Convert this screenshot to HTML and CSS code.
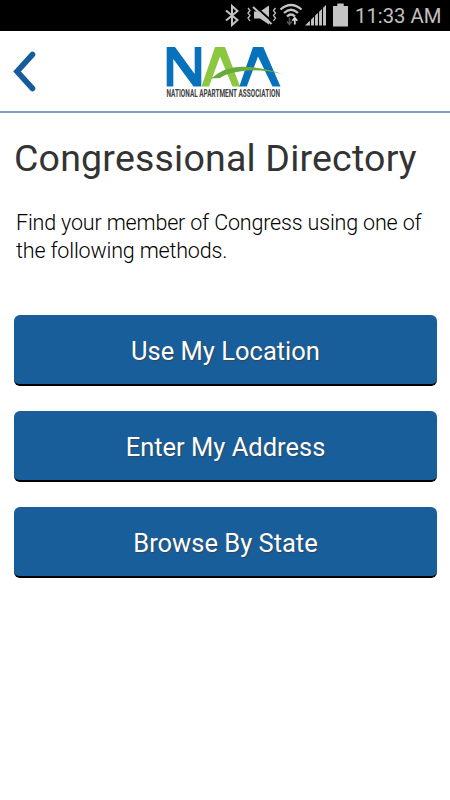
FILE: index.html
```html
<!DOCTYPE html>
<html lang="en">
<head>
  <meta charset="UTF-8">
  <title>Congressional Directory</title>
  <link rel="stylesheet" href="styles.css">
</head>
<body>

  <div class="status-bar">
    <svg class="status-icons" width="128" height="30" viewBox="0 0 128 30">
      <!-- bluetooth -->
      <path d="M4 10.500L15.500 20L10 25V6L15.500 11L4 20.500" fill="none" stroke="#c4c4c4" stroke-width="2"/>
      <!-- vibrate / muted -->
      <path d="M32 11.500h6l9-6v19l-9-6h-6z" fill="#c4c4c4"/>
      <path d="M32 5.500L52 23" stroke="#000" stroke-width="2"/>
      <path d="M31 7L49.500 24" stroke="#c4c4c4" stroke-width="2"/>
      <path d="M26 8l2 2.500-2 2.500 2 2.500-2 2.500 2 3M53.500 8l-2 2.500 2 2.500-2 2.500 2 2.500-2 3" fill="none" stroke="#c4c4c4" stroke-width="1.300"/>
      <!-- wifi -->
      <path d="M58.500 9.500Q69 .5 79.500 9.500M62 13Q69 6.500 76 13M65 16.500Q69 12.500 73 16.500" fill="none" stroke="#c4c4c4" stroke-width="2.300"/>
      <path d="M67.500 17.500v7M65 21.500l2.500 3 2.500-3" fill="none" stroke="#555" stroke-width="1.600"/>
      <path d="M72.800 24.500V18M70.300 20.800l2.500-3 2.500 3" fill="none" stroke="#ddd" stroke-width="1.700"/>
      <!-- signal -->
      <path d="M83 25.500L104 5v20.500z" fill="#c4c4c4"/>
      <path d="M88.500 5v21M92.500 5v21M96.500 5v21M100.500 5v21" stroke="#000" stroke-width="1.100"/>
      <!-- battery -->
      <path d="M111 6h4.300V3.500h6.400V6h4.300v20.500h-15z" fill="#c4c4c4"/>
    </svg>
    <span class="time">11:33 AM</span>
  </div>

  <header class="header">
    <a class="back" href="#">
      <svg width="24" height="42" viewBox="0 0 24 42">
        <path d="M19.500 3.500L4 20.500L19.500 37.500" fill="none" stroke="#165c9c" stroke-width="5.600" stroke-linecap="round"/>
      </svg>
    </a>
    <div class="logo">
      <svg width="122" height="60" viewBox="0 0 122 60">
        <path d="M.7 40.500V1H9L28.700 28V1h6.600v39.500H27.500L7.300 13v27.500z" fill="#0871bc"/>
        <path d="M35.500 40.500L49 1h10L74 40.500h-7.500L54 10.500L43 40.500z" fill="#8bc83f"/>
        <path d="M73.300 40.500L87 1h10.300L114.500 40.500h-8L92 10.500L80.800 40.500z" fill="#0871bc"/>
        <path d="M45 32.500Q58 21 76 20.800Q97 20.800 116.500 28Q92 22.800 77 25Q60 27 54 32z" fill="#6aaa3b"/>
        <text class="logo-name" x=".5" y="51" textLength="113.500" lengthAdjust="spacingAndGlyphs">NATIONAL APARTMENT ASSOCIATION</text>
      </svg>
    </div>
  </header>

  <main class="content">
    <h1>Congressional Directory</h1>
    <p class="intro">Find your member of Congress using one of the following methods.</p>

    <div class="methods">
      <button class="method-btn">Use My Location</button>
      <button class="method-btn">Enter My Address</button>
      <button class="method-btn">Browse By State</button>
    </div>
  </main>

</body>
</html>
```
FILE: styles.css
```css
* {
  box-sizing: border-box;
}
body {
  margin: 0;
  font-family: Roboto, sans-serif;
  background: #fff;
}
.status-bar {
  display: flex;
  justify-content: flex-end;
  height: 31px;
  padding-right: 9px;
  background: #000;
}
.status-icons {
  flex-shrink: 0;
  margin-right: 5px;
}
.time {
  width: 86px;
  font-size: 20.3px;
  line-height: 32px;
  color: #c0c0c0;
  white-space: nowrap;
}
.header {
  display: grid;
  grid-template-columns: 166px 1fr;
  height: 82px;
  padding-top: 15px;
  border-bottom: 2px solid #7e9cc8;
}
.back {
  height: 42px;
  padding: 5px 0 0 13px;
}
.logo svg {
  display: block;
  overflow: visible;
}
.logo-name {
  font-size: 10.2px;
  font-weight: bold;
  fill: #414042;
}
.content {
  padding: 22px 13px 0 14px;
}
h1 {
  margin: 0;
  font-size: 37.5px;
  font-weight: normal;
  line-height: 46px;
  letter-spacing: 0.2px;
  color: #333;
  white-space: nowrap;
}
.intro {
  margin: 28px 0 0;
  padding-left: 2px;
  font-size: 21.5px;
  font-weight: 300;
  line-height: 28px;
  letter-spacing: -0.17px;
  color: #000;
}
.methods {
  display: grid;
  gap: 25px;
  margin-top: 49.5px;
}
.method-btn {
  height: 71px;
  padding: 4px 0 0;
  border: none;
  border-bottom: 2px solid #000;
  border-radius: 6px;
  background: #185e9b;
  color: #fff;
  font-family: inherit;
  font-size: 25.5px;
  text-shadow: 1px 1px 1px #33475c;
}
```
